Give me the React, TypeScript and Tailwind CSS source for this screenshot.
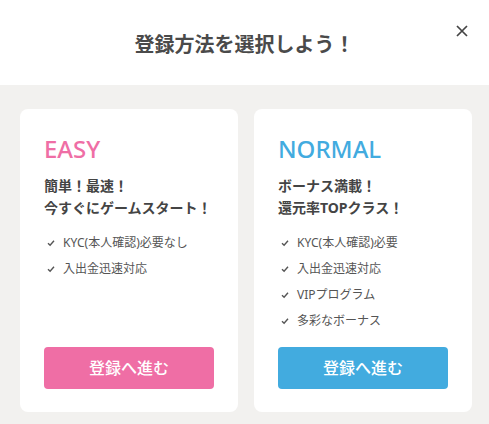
const jp = { fontFamily: '"Noto Sans", "Noto Sans CJK JP", sans-serif' };

function Check() {
  return (
    <svg width="8" height="8" viewBox="0 0 8 8" className="shrink-0">
      <path d="M1 4.2 L3.1 6.2 L7 1.8" fill="none" stroke="#555" strokeWidth="1.4" />
    </svg>
  );
}

type Plan = {
  name: string;
  color: string;
  btn: string;
  lines: string[];
  items: string[];
};

const plans: Plan[] = [
  {
    name: "EASY",
    color: "text-[#ef6ea5]",
    btn: "bg-[#ef6ea5]",
    lines: ["簡単！最速！", "今すぐにゲームスタート！"],
    items: ["KYC(本人確認)必要なし", "入出金迅速対応"],
  },
  {
    name: "NORMAL",
    color: "text-[#42abdf]",
    btn: "bg-[#42abdf]",
    lines: ["ボーナス満載！", "還元率TOPクラス！"],
    items: ["KYC(本人確認)必要", "入出金迅速対応", "VIPプログラム", "多彩なボーナス"],
  },
];

function Card({ p }: { p: Plan }) {
  return (
    <div className="flex flex-col rounded-lg bg-white px-6 pt-6 pb-[23px]">
      <div className={`text-[24px] leading-8 font-medium ${p.color}`}>{p.name}</div>
      <div className="mt-[10px] text-[14px] leading-[22px] font-bold text-[#444]">
        {p.lines.map((l) => (
          <div key={l}>{l}</div>
        ))}
      </div>
      <ul className="mt-[11px] mb-[13px]">
        {p.items.map((it) => (
          <li key={it} className="flex h-[26px] items-center gap-[8px] pl-[3px] text-[12px] text-[#555]">
            <Check />
            <span>{it}</span>
          </li>
        ))}
      </ul>
      <button
        className={`mt-auto h-[42px] w-full rounded-[4px] text-[16px] font-medium text-white ${p.btn}`}
      >
        登録へ進む
      </button>
    </div>
  );
}

export default function App() {
  return (
    <div className="h-[424px] w-[489px] bg-[#f2f1ef]" style={jp}>
      <header className="relative flex h-[85px] items-center justify-center bg-white pt-[4px]">
        <h1 className="text-[20px] font-bold text-[#4a4a4a]">登録方法を選択しよう！</h1>
        <button className="absolute top-[25px] right-[21px]">
          <svg width="12" height="12" viewBox="0 0 12 12">
            <path d="M1 1 L11 11 M11 1 L1 11" stroke="#444" strokeWidth="1.7" />
          </svg>
        </button>
      </header>
      <div className="grid grid-cols-[218px_218px] gap-4 pl-5 pt-6">
        {plans.map((p) => (
          <Card key={p.name} p={p} />
        ))}
      </div>
    </div>
  );
}
